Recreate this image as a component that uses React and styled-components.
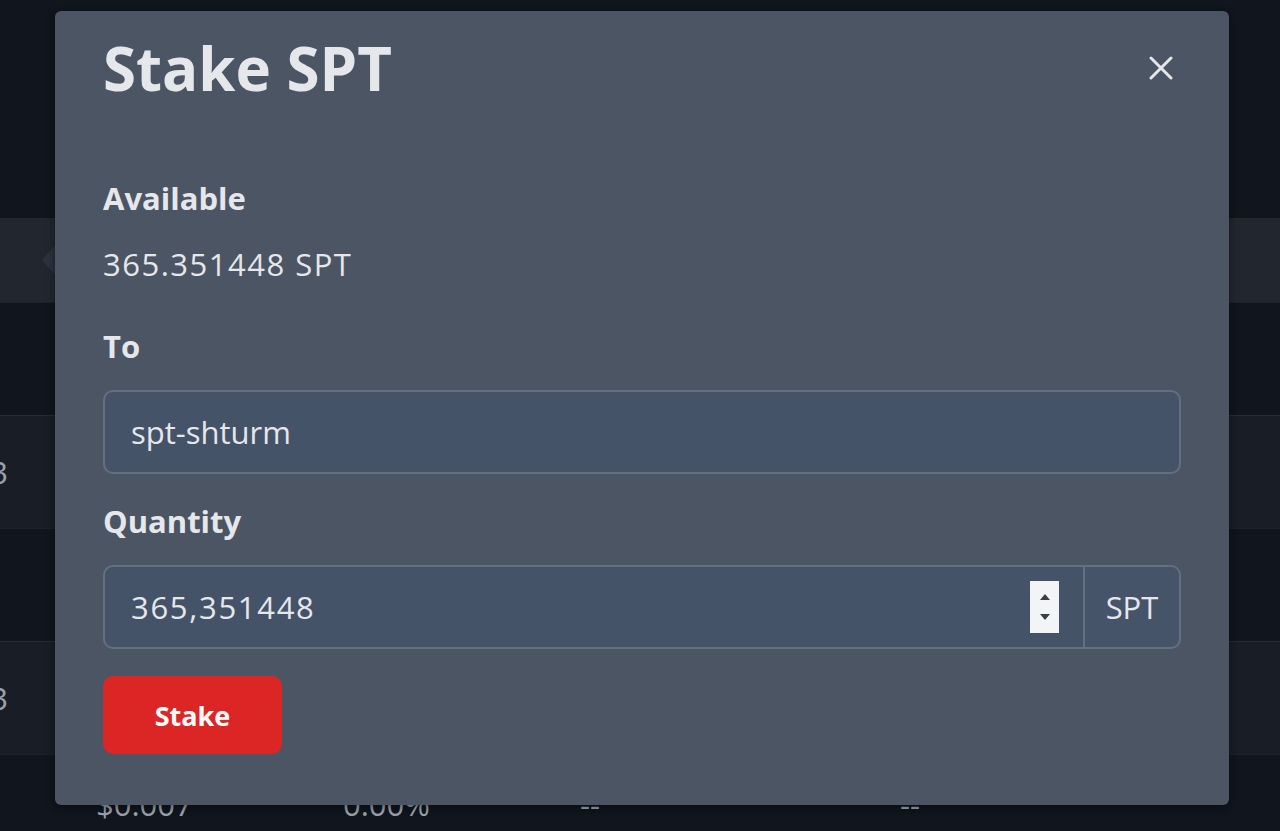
import React from 'react'
import styled, { createGlobalStyle } from 'styled-components'

const GlobalStyle = createGlobalStyle`
  body {
    margin: 0;
    background: #10151e;
    font-family: 'Open Sans', 'Noto Sans', sans-serif;
  }
`

const rows = [
  { tone: 'dark', lead: '' },
  { tone: 'light', lead: '0.003' },
  { tone: 'dark', lead: '' },
  { tone: 'light', lead: '0.003' },
]

const App = () => {
  return (
    <>
      <GlobalStyle />
      <Page>
        <TableArea>
          <HeadBand>
            <svg width="30" height="34" viewBox="0 0 30 34">
              <path d="M15 2 L28 17 L15 32 L2 17 Z" fill="#2c323c" />
            </svg>
          </HeadBand>
          {rows.map((r, i) => (
            <Row key={i} tone={r.tone}>
              <LeadCell>{r.lead}</LeadCell>
            </Row>
          ))}
          <Row tone="dark" last>
            <LeadCell />
            <Cell>$0.007</Cell>
            <Cell>0.00%</Cell>
            <Cell>--</Cell>
            <Cell>--</Cell>
          </Row>
        </TableArea>

        <Modal>
          <Header>
            <Title>Stake SPT</Title>
            <CloseButton aria-label="close">
              <svg width="24" height="24" viewBox="0 0 24 24">
                <path d="M2 2 L22 22 M22 2 L2 22" stroke="#e5e7eb" strokeWidth="3" strokeLinecap="round" />
              </svg>
            </CloseButton>
          </Header>

          <Label style={{ marginTop: 79 }}>Available</Label>
          <Value>365.351448 SPT</Value>

          <Label style={{ marginTop: 42 }}>To</Label>
          <TextInput defaultValue="spt-shturm" />

          <Label style={{ marginTop: 27 }}>Quantity</Label>
          <InputGroup>
            <NumberShell>
              <NumberInput defaultValue="365,351448" />
              <Spinner>
                <svg width="12" height="8" viewBox="0 0 12 8">
                  <path d="M6 1 L11 7 L1 7 Z" fill="#3a3f47" />
                </svg>
                <svg width="12" height="8" viewBox="0 0 12 8">
                  <path d="M1 1 L11 1 L6 7 Z" fill="#3a3f47" />
                </svg>
              </Spinner>
            </NumberShell>
            <Addon>SPT</Addon>
          </InputGroup>

          <StakeButton>Stake</StakeButton>
        </Modal>
      </Page>
    </>
  )
}

export default App

const Page = styled.div`
  position: relative;
  height: 831px;
  overflow: hidden;
`

const TableArea = styled.div`
  padding-top: 218px;
`

const HeadBand = styled.div`
  height: 84px;
  background: #22272f;
  display: flex;
  align-items: center;
  padding-left: 40px;
`

const Row = styled.div`
  height: 113px;
  box-sizing: border-box;
  border-top: 1px solid ${(p) => (p.tone === 'light' ? '#262b34' : '#1c212a')};
  background: ${(p) => (p.tone === 'light' ? '#181d26' : '#10151e')};
  display: grid;
  grid-template-columns: 96px 247px 237px 320px 1fr;
  align-items: center;
  padding-bottom: ${(p) => (p.last ? '14px' : '0')};
  color: #9ba1aa;
  font-size: 31px;
`

const LeadCell = styled.div`
  display: flex;
  justify-content: flex-end;
  padding-right: 88px;
  white-space: nowrap;
`

const Cell = styled.div`
  white-space: nowrap;
`

const Modal = styled.div`
  position: absolute;
  top: 11px;
  left: 55px;
  width: 1174px;
  height: 794px;
  box-sizing: border-box;
  padding: 26px 48px 50px 48px;
  background: #4b5563;
  border-radius: 6px;
  box-shadow: 0 2px 8px rgba(0, 0, 0, 0.45);
  color: #e5e7eb;
  display: flex;
  flex-direction: column;
  align-items: flex-start;
`

const Header = styled.div`
  align-self: stretch;
  display: flex;
  align-items: center;
  justify-content: space-between;
  height: 62px;
`

const Title = styled.h2`
  margin: 0;
  font-size: 60px;
  font-weight: 700;
  line-height: 62px;
  color: #e5e7eb;
`

const CloseButton = styled.button`
  border: none;
  background: none;
  padding: 0;
  margin-right: 8px;
  display: flex;
  cursor: pointer;
`

const Label = styled.div`
  font-size: 31px;
  font-weight: 700;
  line-height: 40px;
  margin-bottom: 24px;
`

const Value = styled.div`
  font-size: 31px;
  line-height: 40px;
  margin-top: 2px;
  letter-spacing: 1.5px;
`

const TextInput = styled.input`
  align-self: stretch;
  height: 84px;
  box-sizing: border-box;
  border: 2px solid #646f80;
  border-radius: 10px;
  background: #455368;
  color: #e5e7eb;
  font: inherit;
  font-size: 31px;
  padding: 0 26px;
  outline: none;
`

const InputGroup = styled.div`
  align-self: stretch;
  display: flex;
  height: 84px;
`

const NumberShell = styled.div`
  flex: 1;
  display: flex;
  align-items: center;
  box-sizing: border-box;
  border: 2px solid #646f80;
  border-radius: 10px 0 0 10px;
  background: #455368;
  padding-right: 24px;
`

const NumberInput = styled.input`
  flex: 1;
  min-width: 0;
  border: none;
  background: transparent;
  color: #e5e7eb;
  font: inherit;
  font-size: 31px;
  letter-spacing: 1.7px;
  padding: 0 26px;
  outline: none;
`

const Spinner = styled.div`
  width: 29px;
  height: 52px;
  background: #f3f4f6;
  display: flex;
  flex-direction: column;
  align-items: center;
  justify-content: space-evenly;
`

const Addon = styled.div`
  width: 96px;
  box-sizing: border-box;
  border: 2px solid #646f80;
  border-left: none;
  border-radius: 0 10px 10px 0;
  background: #465469;
  display: flex;
  align-items: center;
  justify-content: center;
  font-size: 31px;
`

const StakeButton = styled.button`
  margin-top: 27px;
  width: 179px;
  height: 78px;
  border: none;
  border-radius: 10px;
  background: #dc2626;
  color: #ffffff;
  font: inherit;
  font-size: 27px;
  font-weight: 700;
  cursor: pointer;
`
